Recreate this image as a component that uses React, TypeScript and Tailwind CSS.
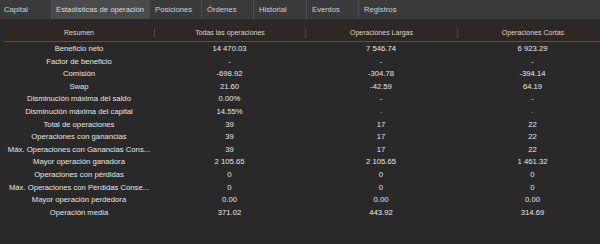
const tabs = [
  { label: "Capital", w: "w-[51px]", edge: true },
  { label: "Estadísticas de operación", w: "w-[99px]", active: true },
  { label: "Posiciones", w: "w-[52px]" },
  { label: "Órdenes", w: "w-[52px]" },
  { label: "Historial", w: "w-[53px]" },
  { label: "Eventos", w: "w-[52px]" },
  { label: "Registros", w: "w-[60px]", edge: true },
];

const headers = ["Resumen", "Todas las operaciones", "Operaciones Largas", "Operaciones Cortas"];

type Row = { label: string; values: string[]; dim?: boolean[] };

const rows: Row[] = [
  { label: "Beneficio neto", values: ["14 470.03", "7 546.74", "6 923.29"] },
  { label: "Factor de beneficio", values: ["-", "-", "-"] },
  { label: "Comisión", values: ["-698.92", "-304.78", "-394.14"] },
  { label: "Swap", values: ["21.60", "-42.59", "64.19"] },
  { label: "Disminución máxima del saldo", values: ["0.00%", "-", "-"] },
  {
    label: "Disminución máxima del capital",
    values: ["14.55%", "-", "-"],
    dim: [false, true, true],
  },
  { label: "Total de operaciones", values: ["39", "17", "22"] },
  { label: "Operaciones con ganancias", values: ["39", "17", "22"] },
  { label: "Máx. Operaciones con Ganancias Cons...", values: ["39", "17", "22"] },
  { label: "Mayor operación ganadora", values: ["2 105.65", "2 105.65", "1 461.32"] },
  { label: "Operaciones con pérdidas", values: ["0", "0", "0"] },
  { label: "Máx. Operaciones con Pérdidas Conse...", values: ["0", "0", "0"] },
  { label: "Mayor operación perdedora", values: ["0.00", "0.00", "0.00"] },
  { label: "Operación media", values: ["371.02", "443.92", "314.69"] },
];

const cols = "grid grid-cols-[150px_151px_152px_151px] w-[604px]";

export default function App() {
  return (
    <div
      className="w-[600px] h-[244px] overflow-hidden bg-[#292929] text-[#e6e6e6]"
      style={{ fontFamily: '"Liberation Sans", Arial, sans-serif' }}
    >
      <nav className="flex h-[19px] bg-[#3a3a3a]">
        {tabs.map((t) => (
          <div
            key={t.label}
            className={`${t.w} flex items-center px-[5px] text-[7.7px] whitespace-nowrap border-r ${
              t.active
                ? "bg-[#4a4a4a] text-[#dcdcdc] border-transparent"
                : t.edge
                ? "text-[#d0d0d0] border-transparent"
                : "text-[#d0d0d0] border-[#4c4c4c]"
            } ${t.label === "Capital" ? "pl-[4px]" : ""}`}
          >
            {t.label}
          </div>
        ))}
      </nav>

      <div className="pl-[4px] pt-[7px]">
        <div className={`${cols} h-[16px] bg-[#2f2822] border-b border-[#57524c]`}>
          {headers.map((h, i) => (
            <div key={h} className="flex items-center">
              {i > 0 && <div className="w-px h-[9px] bg-[#4e4943]" />}
              <span className="flex-1 text-center text-[7px] text-[#d6d6d6]">{h}</span>
            </div>
          ))}
        </div>

        <div className="pt-px">
          {rows.map((r) => (
            <div key={r.label} className={`${cols} h-[12.6px] items-center text-[7.7px]`}>
              <div className="whitespace-nowrap text-center leading-[12.6px]">{r.label}</div>
              {r.values.map((v, i) => (
                <div
                  key={i}
                  className={`text-center leading-[12.6px] ${
                    r.dim?.[i] ? "text-[#7a7a7a]" : ""
                  }`}
                >
                  {v}
                </div>
              ))}
            </div>
          ))}
        </div>
      </div>
    </div>
  );
}
